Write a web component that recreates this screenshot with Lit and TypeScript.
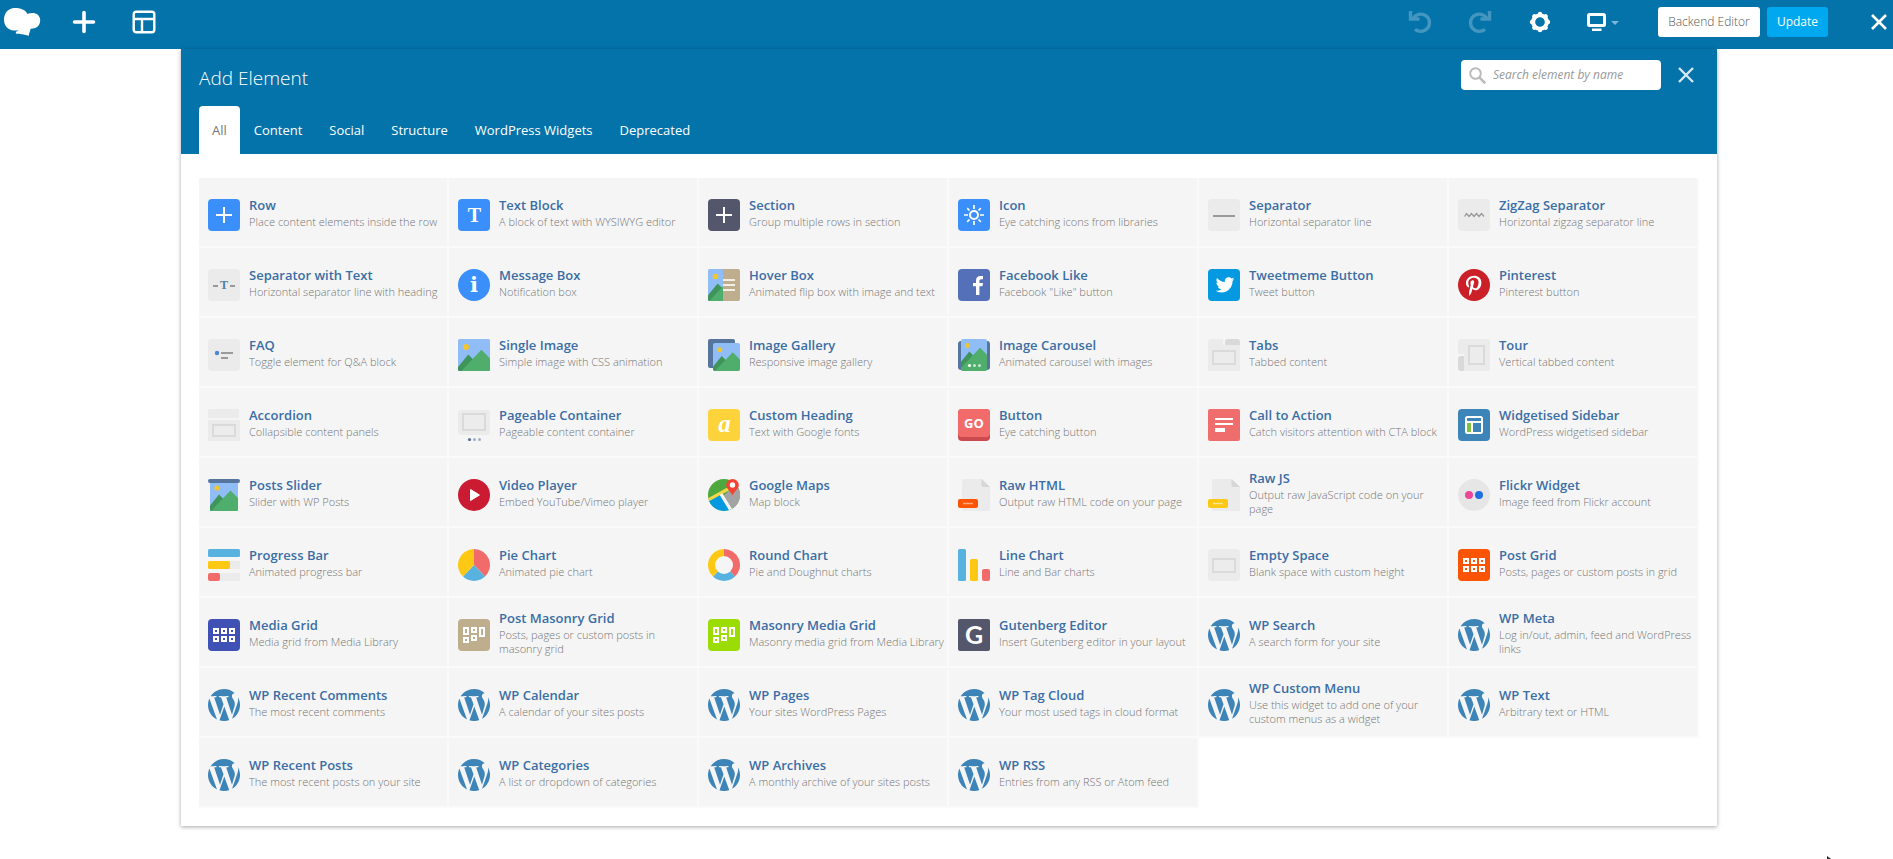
import { LitElement, html, svg, css } from "lit";
import type { SVGTemplateResult } from "lit";
import { customElement, property, state } from "lit/decorators.js";
import { classMap } from "lit/directives/class-map.js";

type Art = SVGTemplateResult;

const tile = (color: string, inner: Art, radius = 4): Art => svg`
  <rect width="32" height="32" rx=${radius} fill=${color}></rect>${inner}`;

const plus = svg`<path d="M8 16h16M16 8v16" stroke="#fff" stroke-width="2"></path>`;

const landscape = (id: string, x: number, y: number, w: number, h: number, r = 1.5): Art => svg`
  <clipPath id=${id}><rect x=${x} y=${y} width=${w} height=${h} rx=${r}></rect></clipPath>
  <g clip-path="url(#${id})">
    <rect x=${x} y=${y} width=${w} height=${h} fill="#90bdf6"></rect>
    <g transform="translate(${x} ${y}) scale(${Math.min(w, h) / 28})">
      <circle cx="7" cy="7" r="2.6" fill="#eec630"></circle>
      <path d="M-2 27L9 13.500l5 5L2 32h-4z" fill="#3e945b"></path>
      <path d="M0 31L20.500 9.500 36 25v10H-4z" fill="#4fae6b"></path>
    </g>
  </g>`;

const frame = (x: number, y: number, w: number, h: number): Art => svg`
  <rect x=${x} y=${y} width=${w} height=${h} fill="#ececec" stroke="#dadada" stroke-width="2"></rect>`;

const hollow = (cells: number[][]): Art => svg`${cells.map(
  ([x, y, h]) => svg`<rect x=${x + 1} y=${y + 1} width="4" height=${h - 2} fill="none" stroke="#fff" stroke-width="2"></rect>`,
)}`;

const evenCells = [[5, 9, 6], [13, 9, 6], [21, 9, 6], [5, 17, 6], [13, 17, 6], [21, 17, 6]];
const masonryCells = [[5, 8, 8], [13, 8, 6], [21, 8, 10], [5, 18, 6], [13, 16, 6]];

const sheet = (label: string): Art => svg`
  <path d="M6 0h18l8 8v24H6a2 2 0 0 1-2-2V2a2 2 0 0 1 2-2z" fill="#ebebeb"></path>
  <path d="M23.500 0L32 8h-6.500a2 2 0 0 1-2-2z" fill="#d6d6d6"></path>
  <rect y="20" width="20" height="9" rx="2" fill=${label}></rect>
  <path d="M5 24.500h10" stroke="#fff" stroke-opacity=".5" stroke-width="1.500"></path>`;

const wordpress = svg`<g transform="scale(.3045) translate(-8.7 -8.7)" fill="#3d84b8">
  <path d="M8.708 61.26c0 20.802 12.089 38.779 29.619 47.298l-25.069-68.686c-2.916 6.536-4.55 13.769-4.55 21.388z"></path>
  <path d="M96.74 58.608c0-6.495-2.333-10.993-4.334-14.494-2.664-4.329-5.161-7.995-5.161-12.324 0-4.831 3.664-9.328 8.825-9.328.233 0 .454.029.681.042-9.35-8.566-21.807-13.796-35.489-13.796-18.36 0-34.513 9.42-43.91 23.688 1.233.037 2.395.063 3.382.063 5.497 0 14.006-.667 14.006-.667 2.833-.167 3.167 3.994.337 4.329 0 0-2.847.335-6.015.501l19.138 56.925 11.501-34.493-8.188-22.434c-2.83-.166-5.511-.501-5.511-.501-2.832-.166-2.5-4.496.332-4.329 0 0 8.679.667 13.843.667 5.496 0 14.006-.667 14.006-.667 2.835-.167 3.168 3.994.337 4.329 0 0-2.853.335-6.015.501l18.992 56.494 5.242-17.517c2.272-7.269 4.001-12.49 4.001-16.989z"></path>
  <path d="M62.184 65.857l-15.768 45.819c4.708 1.384 9.687 2.141 14.846 2.141 6.12 0 11.989-1.058 17.452-2.979-.14-.225-.269-.464-.374-.724z"></path>
  <path d="M107.376 36.046c.226 1.674.354 3.471.354 5.404 0 5.333-.996 11.328-3.996 18.824l-16.053 46.413c15.624-9.111 26.133-26.038 26.133-45.426.001-9.137-2.333-17.729-6.438-25.215z"></path>
</g>`;

const art: Record<string, Art> = {
  row: tile("#3b8ffb", plus),
  section: tile("#54566b", plus),
  text: tile("#3b8ffb", svg`<text class="serif" x="16.500" y="23" font-size="20" fill="#fff">T</text>`),
  icon: tile("#3b8ffb", svg`
    <circle cx="16" cy="16" r="4" fill="none" stroke="#fff" stroke-width="2"></circle>
    <path d="M16 6v4M16 22v4M6 16h4M22 16h4M9.200 9.200l2.300 2.300M20.500 20.500l2.300 2.300M22.800 9.200l-2.300 2.300M11.500 20.500l-2.300 2.300" stroke="#fff" stroke-width="1.700"></path>`),
  separator: tile("#ebebeb", svg`<path d="M5 17h22" stroke="#999" stroke-width="2"></path>`),
  zigzag: tile("#ebebeb", svg`<path d="M6.500 17.500l2-3 2.500 3 2.500-3 2.500 3 2.500-3 2.500 3 2.500-3 2.500 3" fill="none" stroke="#999" stroke-width="1.300"></path>`),
  sepText: tile("#ebebeb", svg`<path d="M5 17h5M22 17h5" stroke="#999" stroke-width="2"></path>
    <text class="serif" x="16" y="20" font-size="12" fill="#4a7fa5">T</text>`),
  info: svg`<circle cx="16" cy="16" r="16" fill="#3b8ffb"></circle>
    <text class="slab" x="16" y="23" font-size="21" fill="#fff">i</text>`,
  hover: svg`${landscape("hover", 0, 0, 30, 32)}
    <path d="M15 0h15a2 2 0 0 1 2 2v28a2 2 0 0 1-2 2H15z" fill="#bfae8e"></path>
    <path d="M15 11h12M15 16h12M15 21h12" stroke="#f4efe4" stroke-width="2"></path>`,
  facebook: tile("#5470b9", svg`<path d="M18 26v-8.700h-3V14h3v-2.500C18 8.500 19.700 7 22.400 7c1.300 0 2.400.1 2.600.1v3.200h-1.800c-1.400 0-1.800.7-1.800 1.700v2H25l-.5 3.300h-3.100V26z" fill="#fff"></path>`),
  twitter: tile("#0499e0", svg`<path transform="translate(7.700 6.500) scale(.78)" fill="#fff" d="M23.954 4.569c-.885.389-1.83.654-2.825.775 1.014-.611 1.794-1.574 2.163-2.723-.951.555-2.005.959-3.127 1.184-.896-.959-2.173-1.559-3.591-1.559-2.717 0-4.92 2.203-4.92 4.917 0 .39.045.765.127 1.124C7.691 8.094 4.066 6.13 1.64 3.161c-.427.722-.666 1.561-.666 2.475 0 1.71.87 3.213 2.188 4.096-.807-.026-1.566-.248-2.228-.616v.061c0 2.385 1.693 4.374 3.946 4.827-.413.111-.849.171-1.296.171-.314 0-.615-.03-.916-.086.631 1.953 2.445 3.377 4.604 3.417-1.68 1.319-3.809 2.105-6.102 2.105-.39 0-.779-.023-1.17-.067 2.189 1.394 4.768 2.209 7.557 2.209 9.054 0 13.999-7.496 13.999-13.986 0-.209 0-.42-.015-.63.961-.689 1.8-1.56 2.46-2.548z"></path>`),
  pinterest: svg`<circle cx="16" cy="16" r="16" fill="#cb2027"></circle>
    <path transform="translate(8 6.600) scale(.04)" fill="#fff" d="M204 6.5C101.4 6.5 0 74.9 0 185.6 0 256 39.6 296 63.6 296c9.9 0 15.6-27.6 15.6-35.4 0-9.3-23.7-29.1-23.7-67.8 0-80.4 61.2-137.4 140.4-137.4 68.1 0 118.5 38.7 118.5 109.8 0 53.1-21.3 152.7-90.3 152.7-24.900 0-46.200-18-46.200-43.800 0-37.800 26.400-74.400 26.400-113.400 0-66.200-93.900-54.200-93.900 25.800 0 16.800 2.100 35.400 9.600 50.700-13.800 59.400-42 147.900-42 209.100 0 18.900 2.700 37.500 4.500 56.400 3.400 3.800 1.700 3.400 6.900 1.500 50.400-69 48.600-82.500 71.400-172.800 12.300 23.400 44.100 36 69.300 36 106.200 0 153.900-103.500 153.900-196.800C384 71.300 298.200 6.500 204 6.500z"></path>`,
  faq: tile("#ebebeb", svg`<circle cx="9" cy="14" r="2.200" fill="#4c86d6"></circle>
    <path d="M13 14h12M13 19h7" stroke="#999" stroke-width="2"></path>`),
  image: landscape("single", 0, 0, 32, 32),
  gallery: svg`<rect width="27" height="29" rx="2" fill="#55759d"></rect>${landscape("gallery", 5, 4, 27, 28, 2)}`,
  carousel: svg`<rect y="2" width="32" height="29" rx="3" fill="#55759d"></rect>${landscape("carousel", 3, 0, 26, 32, 2)}
    <circle cx="11.500" cy="26.500" r="1.600" fill="#fff"></circle>
    <circle cx="16.500" cy="26.500" r="1.500" fill="#fff" opacity=".7"></circle>
    <circle cx="21.500" cy="26.500" r="1.500" fill="#fff" opacity=".7"></circle>`,
  tabs: svg`<path d="M2 0h13v6h17v26H0V2z" fill="#ebebeb"></path>
    <path d="M17 6V3a3 3 0 0 1 3-3h9a3 3 0 0 1 3 3v3z" fill="#d9d9d9"></path>${frame(5, 12, 22, 13)}`,
  tour: svg`<path d="M2 0h28a2 2 0 0 1 2 2v28a2 2 0 0 1-2 2H6V15H0V2z" fill="#ebebeb"></path>
    <path d="M6 17v15H3a3 3 0 0 1-3-3v-9a3 3 0 0 1 3-3z" fill="#d9d9d9"></path>${frame(11, 7, 15, 18)}`,
  accordion: svg`<path d="M1 0h30v9H0V1z" fill="#ebebeb"></path>
    <rect y="11" width="32" height="21" rx="1" fill="#ebebeb"></rect>${frame(5, 16, 22, 11)}`,
  pageable: svg`<rect y="1" width="32" height="25" rx="3" fill="#ebebeb"></rect>${frame(5, 5, 22, 16)}
    <circle cx="11.500" cy="30.500" r="1.600" fill="#5c7399"></circle>
    <circle cx="16.500" cy="30.500" r="1.500" fill="#9fb0c8"></circle>
    <circle cx="21.500" cy="30.500" r="1.500" fill="#9fb0c8"></circle>`,
  heading: tile("#fdd33b", svg`<text class="serif italic" x="16.500" y="23" font-size="25" fill="#fff">a</text>`),
  button: svg`<rect width="32" height="32" rx="4" fill="#ca4a4f"></rect>
    <rect width="32" height="28" rx="4" fill="#f16b6b"></rect>
    <text class="sans" x="16" y="19" font-size="13" fill="#fff">GO</text>`,
  cta: tile("#f06d6e", svg`<path d="M7 10h18M7 15h18" stroke="#fff" stroke-width="2"></path>
    <path d="M7 19h10v4H7z" fill="#fff"></path>`, 2),
  sidebar: tile("#3d84b8", svg`<rect x="8" y="8" width="16" height="16" rx="1.500" fill="none" stroke="#fff" stroke-width="2"></rect>
    <path d="M8 13h16M14 13v11" stroke="#fff" stroke-width="2"></path>
    <path d="M9 14h4v9H9z" fill="#7fc142"></path>`),
  slider: svg`${landscape("slider", 2, 2, 28, 30)}<rect width="32" height="4" rx="2" fill="#55759d"></rect>`,
  video: svg`<circle cx="16" cy="16" r="16" fill="#cb1b33"></circle>
    <path d="M12.500 10.500l9 5.500-9 5.500z" fill="#fff" stroke="#fff" stroke-linejoin="round"></path>`,
  maps: svg`<clipPath id="globe"><circle cx="16" cy="16" r="16"></circle></clipPath>
    <g clip-path="url(#globe)">
      <path d="M0 0h32v32H0z" fill="#4fa83d"></path>
      <path d="M14 18L32 2v30H22z" fill="#a3a3a3"></path>
      <path d="M0 22l12-6 12 16H0z" fill="#0499e0"></path>
      <path d="M-1 21.500L21 9.500" stroke="#f2d648" stroke-width="3.200"></path>
      <path d="M13 15l11 18" stroke="#f5f5f5" stroke-width="3.200"></path>
    </g>
    <path d="M24.500 0a6.300 6.300 0 0 0-6.300 6.300c0 3.700 4.300 5.500 6.300 10.200 2-4.700 6.300-6.500 6.300-10.200A6.300 6.300 0 0 0 24.500 0z" fill="#f14336"></path>
    <circle cx="24.500" cy="6" r="2.700" fill="#fff"></circle>`,
  rawHtml: sheet("#fb5404"),
  rawJs: sheet("#fcc814"),
  flickr: svg`<circle cx="16" cy="16" r="16" fill="#e6e6e6"></circle>
    <circle cx="11" cy="16" r="4" fill="#ec4699"></circle><circle cx="21" cy="16" r="4" fill="#1f6fe0"></circle>`,
  progress: svg`<path d="M10 12h22v8H10zM8 24h24v8H8z" fill="#ebebeb"></path>
    <rect width="32" height="8" rx="1.500" fill="#58b2df"></rect>
    <rect y="12" width="22" height="8" rx="1.500" fill="#fcc814"></rect>
    <rect y="24" width="12" height="8" rx="2" fill="#f16b6b"></rect>`,
  pie: svg`<path d="M16 16V0a16 16 0 0 1 11 27.600z" fill="#f16b6b"></path>
    <path d="M16 16l11 11.600a16 16 0 0 1-22 0z" fill="#58b2df"></path>
    <path d="M16 16L5 27.600A16 16 0 0 1 16 0z" fill="#fcc814"></path>`,
  round: svg`<path d="M16 16V0a16 16 0 0 1 11 27.600z" fill="#f16b6b"></path>
    <path d="M16 16l11 11.600a16 16 0 0 1-22 0z" fill="#58b2df"></path>
    <path d="M16 16L5 27.600A16 16 0 0 1 16 0z" fill="#fcc814"></path>
    <circle cx="16" cy="16" r="9" fill="#f5f5f5"></circle>`,
  line: svg`<rect width="8" height="32" rx="1.500" fill="#58b2df"></rect>
    <rect x="12" y="10" width="8" height="22" rx="1.500" fill="#fcc814"></rect>
    <rect x="24" y="20" width="8" height="12" rx="2" fill="#f16b6b"></rect>`,
  empty: tile("#ebebeb", frame(5, 10, 22, 13)),
  postGrid: tile("#fb5404", hollow(evenCells)),
  mediaGrid: tile("#3f51b5", hollow(evenCells)),
  postMasonry: tile("#bfae8e", hollow(masonryCells)),
  mediaMasonry: tile("#9bdc04", hollow(masonryCells)),
  gutenberg: tile("#54566b", svg`<text class="lato" x="16" y="25" font-size="25" fill="#fff">G</text>`, 2),
  wp: wordpress,
};

const elements: [string, string, string][] = [
  ["row", "Row", "Place content elements inside the row"],
  ["text", "Text Block", "A block of text with WYSIWYG editor"],
  ["section", "Section", "Group multiple rows in section"],
  ["icon", "Icon", "Eye catching icons from libraries"],
  ["separator", "Separator", "Horizontal separator line"],
  ["zigzag", "ZigZag Separator", "Horizontal zigzag separator line"],
  ["sepText", "Separator with Text", "Horizontal separator line with heading"],
  ["info", "Message Box", "Notification box"],
  ["hover", "Hover Box", "Animated flip box with image and text"],
  ["facebook", "Facebook Like", 'Facebook "Like" button'],
  ["twitter", "Tweetmeme Button", "Tweet button"],
  ["pinterest", "Pinterest", "Pinterest button"],
  ["faq", "FAQ", "Toggle element for Q&A block"],
  ["image", "Single Image", "Simple image with CSS animation"],
  ["gallery", "Image Gallery", "Responsive image gallery"],
  ["carousel", "Image Carousel", "Animated carousel with images"],
  ["tabs", "Tabs", "Tabbed content"],
  ["tour", "Tour", "Vertical tabbed content"],
  ["accordion", "Accordion", "Collapsible content panels"],
  ["pageable", "Pageable Container", "Pageable content container"],
  ["heading", "Custom Heading", "Text with Google fonts"],
  ["button", "Button", "Eye catching button"],
  ["cta", "Call to Action", "Catch visitors attention with CTA block"],
  ["sidebar", "Widgetised Sidebar", "WordPress widgetised sidebar"],
  ["slider", "Posts Slider", "Slider with WP Posts"],
  ["video", "Video Player", "Embed YouTube/Vimeo player"],
  ["maps", "Google Maps", "Map block"],
  ["rawHtml", "Raw HTML", "Output raw HTML code on your page"],
  ["rawJs", "Raw JS", "Output raw JavaScript code on your page"],
  ["flickr", "Flickr Widget", "Image feed from Flickr account"],
  ["progress", "Progress Bar", "Animated progress bar"],
  ["pie", "Pie Chart", "Animated pie chart"],
  ["round", "Round Chart", "Pie and Doughnut charts"],
  ["line", "Line Chart", "Line and Bar charts"],
  ["empty", "Empty Space", "Blank space with custom height"],
  ["postGrid", "Post Grid", "Posts, pages or custom posts in grid"],
  ["mediaGrid", "Media Grid", "Media grid from Media Library"],
  ["postMasonry", "Post Masonry Grid", "Posts, pages or custom posts in masonry grid"],
  ["mediaMasonry", "Masonry Media Grid", "Masonry media grid from Media Library"],
  ["gutenberg", "Gutenberg Editor", "Insert Gutenberg editor in your layout"],
  ["wp", "WP Search", "A search form for your site"],
  ["wp", "WP Meta", "Log in/out, admin, feed and WordPress links"],
  ["wp", "WP Recent Comments", "The most recent comments"],
  ["wp", "WP Calendar", "A calendar of your sites posts"],
  ["wp", "WP Pages", "Your sites WordPress Pages"],
  ["wp", "WP Tag Cloud", "Your most used tags in cloud format"],
  ["wp", "WP Custom Menu", "Use this widget to add one of your custom menus as a widget"],
  ["wp", "WP Text", "Arbitrary text or HTML"],
  ["wp", "WP Recent Posts", "The most recent posts on your site"],
  ["wp", "WP Categories", "A list or dropdown of categories"],
  ["wp", "WP Archives", "A monthly archive of your sites posts"],
  ["wp", "WP RSS", "Entries from any RSS or Atom feed"],
];

const tabNames = ["All", "Content", "Social", "Structure", "WordPress Widgets", "Deprecated"];

const sansStack = css`"Segoe UI", "Open Sans", "Noto Sans", sans-serif`;

const reset = css`
  * { box-sizing: border-box; }
  button {
    margin: 0;
    padding: 0;
    border: 0;
    background: none;
    font: inherit;
    color: inherit;
    cursor: pointer;
  }
  svg { display: block; }
`;

@customElement("element-card")
export class ElementCard extends LitElement {
  @property() icon = "";
  @property() name = "";
  @property() description = "";

  static styles = [reset, css`
    :host { display: block; }
    .card {
      display: flex;
      align-items: center;
      gap: 9px;
      width: 100%;
      height: 70px;
      padding: 0 2px 0 9px;
      text-align: left;
      background: #f5f5f5;
      border-right: 2px solid #fafafa;
      border-bottom: 2px solid #fafafa;
    }
    .icon { flex: none; width: 32px; height: 32px; margin-top: 6px; }
    .label { display: flex; flex-direction: column; min-width: 0; }
    .name { font-size: 13px; line-height: 20px; font-weight: 600; color: #3a6ea5; }
    .description { font-size: 11px; line-height: 14px; font-weight: 300; color: #757575; }
    text { text-anchor: middle; font-weight: 700; }
    .serif { font-family: "Liberation Serif", serif; }
    .slab { font-family: "DejaVu Serif", serif; }
    .sans { font-family: "Open Sans", sans-serif; }
    .lato { font-family: Lato, sans-serif; }
    .italic { font-style: italic; }
  `];

  render() {
    return html`<button class="card" type="button">
      <svg class="icon" viewBox="0 0 32 32" aria-hidden="true">${art[this.icon]}</svg>
      <span class="label">
        <span class="name">${this.name}</span>
        <span class="description">${this.description}</span>
      </span>
    </button>`;
  }
}

@customElement("editor-bar")
export class EditorBar extends LitElement {
  static styles = [reset, css`
    :host { display: block; background: #0473aa; }
    .bar { display: flex; justify-content: space-between; align-items: flex-start; height: 49px; }
    .group { display: flex; align-items: center; height: 43px; }
    .tool { display: flex; align-items: center; justify-content: center; width: 60px; height: 43px; color: #fff; }
    .logo { width: 54px; justify-content: flex-start; padding-left: 3px; }
    .muted { opacity: .25; }
    .screen { width: 66px; }
    .action {
      height: 30px;
      border-radius: 3px;
      font-size: 12px;
      line-height: 30px;
    }
    .backend { width: 102px; margin: 0 7px 0 22px; background: #fff; color: #555; font-weight: 300; }
    .update { width: 61px; margin-right: 31px; background: #00a9ef; color: #fff; }
    .close { width: 34px; justify-content: flex-start; padding-left: 12px; }
  `];

  render() {
    return html`<header class="bar">
      <div class="group">
        <button class="tool logo" type="button" aria-label="WPBakery">
          <svg width="38" height="30" viewBox="0 0 38 30" fill="#fff">
            <path d="M11.500 1C5.500 1 1 6 1 12.500S5 23 11 23.500c2 .2 3.600-.2 5-.6-1.600 1.300-3.600 1.500-3.200 3 .4 1.300 4.200.7 6.600 1.300l6.500 1.600c-.2-1.900.7-3.300 1.200-5 .3-1 .4-1.600.6-2 6 0 9.500-3.500 9.500-8.500C37.200 8.500 33.500 6 29.500 6c-2 0-3.600.4-5 .9C22.600 3 17.500 1 11.500 1z"></path>
          </svg>
        </button>
        <button class="tool" type="button" aria-label="Add new element">
          <svg width="24" height="24" viewBox="0 0 24 24" fill="none" stroke="currentColor" stroke-width="3.600" stroke-linecap="round"><path d="M12 2.500v19M2.500 12h19"></path></svg>
        </button>
        <button class="tool" type="button" aria-label="Templates">
          <svg width="24" height="24" viewBox="0 0 24 24" fill="none" stroke="currentColor" stroke-width="2.400"><rect x="1.700" y="1.700" width="20.600" height="20.600" rx="2.500"></rect><path d="M2 9h20M10 9v13"></path></svg>
        </button>
      </div>
      <div class="group">
        <button class="tool muted" type="button" aria-label="Undo">
          <svg width="24" height="24" viewBox="0 0 24 24" fill="none" stroke="currentColor" stroke-width="3.400"><path d="M2.500 1v8h9"></path><path d="M5 8.500C8 4 13 3.500 16.500 5c6.500 3 6.500 12 .5 15.200-3 1.600-7 1.300-10-.9"></path></svg>
        </button>
        <button class="tool muted" type="button" aria-label="Redo">
          <svg width="24" height="24" viewBox="0 0 24 24" fill="none" stroke="currentColor" stroke-width="3.400"><path d="M21.500 1v8h-9"></path><path d="M19 8.500C16 4 11 3.500 7.500 5 1 8 1 17 7 20.200c3 1.600 7 1.300 10-.9"></path></svg>
        </button>
        <button class="tool" type="button" aria-label="Settings">
          <svg width="22" height="22" viewBox="0 0 22 22">
            <circle cx="11" cy="11" r="6.700" fill="none" stroke="currentColor" stroke-width="4.200"></circle>
            <g stroke="currentColor" stroke-width="4.400" stroke-linecap="round"><path d="M11 3v.5M11 18.500v.5M3 11h.5M18.500 11h.5M5.300 5.300l.3.300M16.400 16.400l.3.300M16.700 5.300l-.3.300M5.600 16.400l-.3.300"></path></g>
            <circle cx="11" cy="11" r="4.600" fill="#0473aa"></circle>
          </svg>
        </button>
        <button class="tool screen" type="button" aria-label="Responsive preview">
          <svg width="32" height="20" viewBox="0 0 32 20">
            <rect x="1.500" y="2.500" width="16" height="11" rx="1" fill="none" stroke="currentColor" stroke-width="3"></rect>
            <path d="M5 16.500h9.500v2.500H5z" fill="currentColor"></path>
            <path d="M24 9h8l-4 4z" fill="#7db6d6"></path>
          </svg>
        </button>
        <button class="action backend" type="button">Backend Editor</button>
        <button class="action update" type="button">Update</button>
        <button class="tool close" type="button" aria-label="Close editor">
          <svg width="16" height="16" viewBox="0 0 16 16" stroke="currentColor" stroke-width="2.600"><path d="M1 1l14 14M15 1L1 15"></path></svg>
        </button>
      </div>
    </header>`;
  }
}

@customElement("app-root")
export class AppRoot extends LitElement {
  @state() private tab = "All";

  static styles = [reset, css`
    :host {
      display: block;
      position: relative;
      min-height: 100vh;
      background: #fff;
      font-family: ${sansStack};
    }
    .panel {
      margin: 0 176px 0 181px;
      background: #fff;
      box-shadow: 0 1px 4px rgba(0, 0, 0, .35);
    }
    .head { padding: 0 18px; background: #0473aa; color: #fff; }
    .title-row { display: flex; align-items: center; justify-content: space-between; height: 57px; }
    .title { margin: 0; font-size: 19px; line-height: 28px; font-weight: 300; }
    .tools { display: flex; align-items: center; gap: 17px; height: 52px; align-self: flex-start; padding-right: 5px; }
    .search {
      display: flex;
      align-items: center;
      gap: 7px;
      width: 200px;
      height: 30px;
      padding: 0 8px;
      background: #fff;
      border-radius: 4px;
      color: #999;
    }
    .search svg { flex: none; }
    .query {
      min-width: 0;
      flex: 1;
      padding: 0;
      border: 0;
      outline: 0;
      background: none;
      font: italic 12px/20px ${sansStack};
      color: #555;
    }
    .query::placeholder { color: #999; opacity: 1; }
    .dismiss { color: #d7e8f2; }
    .tabs { display: flex; gap: 1px; height: 48px; }
    .tab { padding: 0 13px; font-size: 13px; line-height: 48px; border-radius: 4px 4px 0 0; white-space: nowrap; }
    .tab.active { background: #fff; color: #777; }
    .body { padding: 24px 18px 18px; }
    .grid { display: grid; grid-template-columns: repeat(6, minmax(0, 1fr)); margin: 0; padding: 0; list-style: none; }
    .pointer { position: absolute; right: 62px; bottom: 0; }
  `];

  render() {
    return html`
      <editor-bar></editor-bar>
      <main class="panel">
        <div class="head">
          <div class="title-row">
            <h1 class="title">Add Element</h1>
            <div class="tools">
              <label class="search">
                <svg width="17" height="17" viewBox="0 0 17 17" fill="none" stroke="#bbb" stroke-width="2" role="img" aria-label="Search"><circle cx="6.500" cy="6.500" r="5.300"></circle><path d="M10.300 10.300l6 6" stroke-width="2.600"></path></svg>
                <input class="query" type="text" placeholder="Search element by name">
              </label>
              <button class="dismiss" type="button" aria-label="Close">
                <svg width="16" height="16" viewBox="0 0 16 16" stroke="currentColor" stroke-width="2.400"><path d="M1 1l14 14M15 1L1 15"></path></svg>
              </button>
            </div>
          </div>
          <div class="tabs" role="tablist">
            ${tabNames.map((name) => html`<button
              type="button"
              role="tab"
              aria-selected=${name === this.tab}
              class=${classMap({ tab: true, active: name === this.tab })}
              @click=${() => { this.tab = name; }}
            >${name}</button>`)}
          </div>
        </div>
        <div class="body">
          <ul class="grid">
            ${elements.map(([icon, name, description]) => html`<li>
              <element-card .icon=${icon} .name=${name} .description=${description}></element-card>
            </li>`)}
          </ul>
        </div>
      </main>
      <svg class="pointer" width="4" height="3" viewBox="0 0 4 3" aria-hidden="true"><path d="M0 0l4 3H0z" fill="#222"></path></svg>
    `;
  }
}
